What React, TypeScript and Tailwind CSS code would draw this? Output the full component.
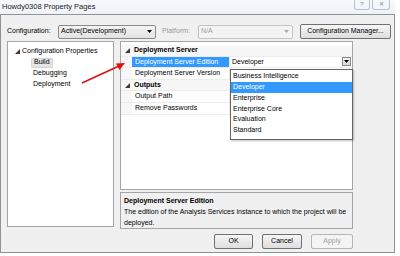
import React from "react";

const font = "font-['Liberation_Sans',Arial,sans-serif]";

function Tri() {
  return (
    <svg width="5" height="5" viewBox="0 0 5 5" className="shrink-0">
      <polygon points="5,0 5,5 0,5" fill="#3c3c3c" />
    </svg>
  );
}

function DownArrow({ color = "#000" }: { color?: string }) {
  return (
    <svg width="5" height="3" viewBox="0 0 5 3">
      <polygon points="0,0 5,0 2.5,3" fill={color} />
    </svg>
  );
}

function WinButton({ label, disabled, w }: { label: string; disabled?: boolean; w: string }) {
  return (
    <div
      className={`${w} h-[15px] flex items-center justify-center rounded-[2px] border text-[7px] ${
        disabled
          ? "border-[#b5b5b5] bg-[#f4f4f4] text-[#a0a0a0]"
          : "border-[#707070] bg-gradient-to-b from-[#f6f6f6] to-[#dedede] text-black"
      }`}
    >
      {label}
    </div>
  );
}

const gridRows: { kind: "cat" | "prop"; label: string; selected?: boolean }[] = [
  { kind: "cat", label: "Deployment Server" },
  { kind: "prop", label: "Deployment Server Edition", selected: true },
  { kind: "prop", label: "Deployment Server Version" },
  { kind: "cat", label: "Outputs" },
  { kind: "prop", label: "Output Path" },
  { kind: "prop", label: "Remove Passwords" },
];

const editions = ["Business Intelligence", "Developer", "Enterprise", "Enterprise Core", "Evaluation", "Standard"];

export default function App() {
  return (
    <div className={`relative w-[400px] h-[256px] overflow-hidden bg-white ${font} text-[7px] text-black`}>
      {/* title bar */}
      <div className="h-[14px] w-[395px] flex items-center justify-between bg-gradient-to-b from-[#f7f9fc] to-[#eef2f7]">
        <span className="pl-[2px] text-[7.5px] text-[#1a1a1a]">Howdy0308 Property Pages</span>
        <div className="flex h-full items-start gap-[2px] pr-[5px]">
          <div className="w-[16px] h-[10px] rounded-b-[3px] border border-t-0 border-[#b8c2cf] bg-[#f3f6fa] flex items-center justify-center text-[6px] text-[#7a8594]">
            ?
          </div>
          <div className="w-[18px] h-[10px] rounded-b-[3px] border border-t-0 border-[#b8c2cf] bg-[#f3f6fa] flex items-center justify-center text-[6px] text-[#7a8594]">
            ✕
          </div>
        </div>
      </div>

      {/* client area */}
      <div className="w-[395px] h-[239px] bg-[#f0f0f0] border border-[#8f9398] pl-[6px] pt-[9px]">
        {/* config row */}
        <div className="flex items-center h-[15px]">
          <span className="w-[51px]">Configuration:</span>
          <div className="w-[98px] h-[14px] flex items-center justify-between rounded-[2px] border border-[#8a8a8a] bg-gradient-to-b from-[#f4f4f4] to-[#e2e2e2] pl-[2px] pr-[3px]">
            <span>Active(Development)</span>
            <DownArrow />
          </div>
          <span className="ml-[6px] w-[36px] text-[#9a9a9a]">Platform:</span>
          <div className="w-[95px] h-[14px] flex items-center justify-between rounded-[2px] border border-[#c4c4c4] bg-[#f4f4f4] pl-[2px] pr-[3px] text-[#a0a0a0]">
            <span>N/A</span>
            <DownArrow color="#a8a8a8" />
          </div>
          <div className="ml-[7px] w-[91px] h-[15px] flex items-center justify-center rounded-[2px] border border-[#707070] bg-gradient-to-b from-[#f6f6f6] to-[#dedede]">
            Configuration Manager...
          </div>
        </div>

        {/* main */}
        <div className="mt-[2px] flex items-start gap-[6px]">
          {/* tree */}
          <div className="w-[107px] h-[186px] border border-[#a5a5a5] bg-white pt-[4px]">
            <div className="flex items-center h-[11px] pl-[7px] gap-[2px]">
              <Tri />
              <span>Configuration Properties</span>
            </div>
            <div className="h-[11px] pl-[23px] flex items-center">
              <span className="px-[2px] h-[10px] flex items-center bg-[#e4e4e4] border border-[#d4d4d4] rounded-[1px]">Build</span>
            </div>
            <div className="h-[11px] pl-[25px] flex items-center">Debugging</div>
            <div className="h-[11px] pl-[25px] flex items-center">Deployment</div>
          </div>

          {/* right column */}
          <div className="w-[233px] flex flex-col">
            <div className="relative h-[149px] border border-[#a5a5a5] bg-white pt-[3px]">
              {gridRows.map((r) => (
                <div key={r.label} className="flex h-[11.6px] border-b border-[#ececec]">
                  {r.kind === "cat" ? (
                    <div className="flex items-center gap-[4px] pl-[4px] font-bold w-full bg-[#f7f7f7]">
                      <Tri />
                      <span>{r.label}</span>
                    </div>
                  ) : (
                    <>
                      <div className="w-[11px] bg-[#f7f7f7]" />
                      <div
                        className={`w-[98px] flex items-center pl-[3px] border-r border-[#ececec] ${
                          r.selected ? "bg-[#3399ff] text-white" : ""
                        }`}
                      >
                        {r.label}
                      </div>
                      {r.selected && (
                        <div className="flex-1 flex items-center justify-between pl-[2px] pr-[1px]">
                          <span>Developer</span>
                          <div className="w-[9px] h-[9px] border border-[#8a8a8a] bg-gradient-to-b from-[#f4f4f4] to-[#dcdcdc] flex items-center justify-center">
                            <DownArrow />
                          </div>
                        </div>
                      )}
                    </>
                  )}
                </div>
              ))}

              {/* open dropdown */}
              <div className="absolute left-[109px] top-[27px] w-[123px] h-[71px] border border-[#646464] bg-white pt-[1px] shadow-[1px_1px_2px_rgba(0,0,0,0.25)]">
                {editions.map((e) => (
                  <div
                    key={e}
                    className={`h-[10.8px] flex items-center pl-[2px] ${e === "Developer" ? "bg-[#3399ff] text-white" : ""}`}
                  >
                    {e}
                  </div>
                ))}
              </div>
            </div>

            <div className="mt-[2px] h-[37px] border border-[#a5a5a5] bg-[#f0f0f0] px-[3px] pt-[2px] leading-[11px]">
              <div className="font-bold">Deployment Server Edition</div>
              <div>The edition of the Analysis Services instance to which the project will be deployed.</div>
            </div>

            <div className="mt-[5px] flex justify-end gap-[9px]">
              <WinButton label="OK" w="w-[39px]" />
              <WinButton label="Cancel" w="w-[40px]" />
              <WinButton label="Apply" w="w-[42px]" disabled />
            </div>
          </div>
        </div>
      </div>

      {/* red annotation arrow */}
      <svg className="absolute left-0 top-0 pointer-events-none" width="400" height="256">
        <line x1="82" y1="83" x2="119" y2="66" stroke="#e01010" strokeWidth="1.6" />
        <polygon points="125,63 116,63.5 119.5,70" fill="#e01010" />
      </svg>
    </div>
  );
}
